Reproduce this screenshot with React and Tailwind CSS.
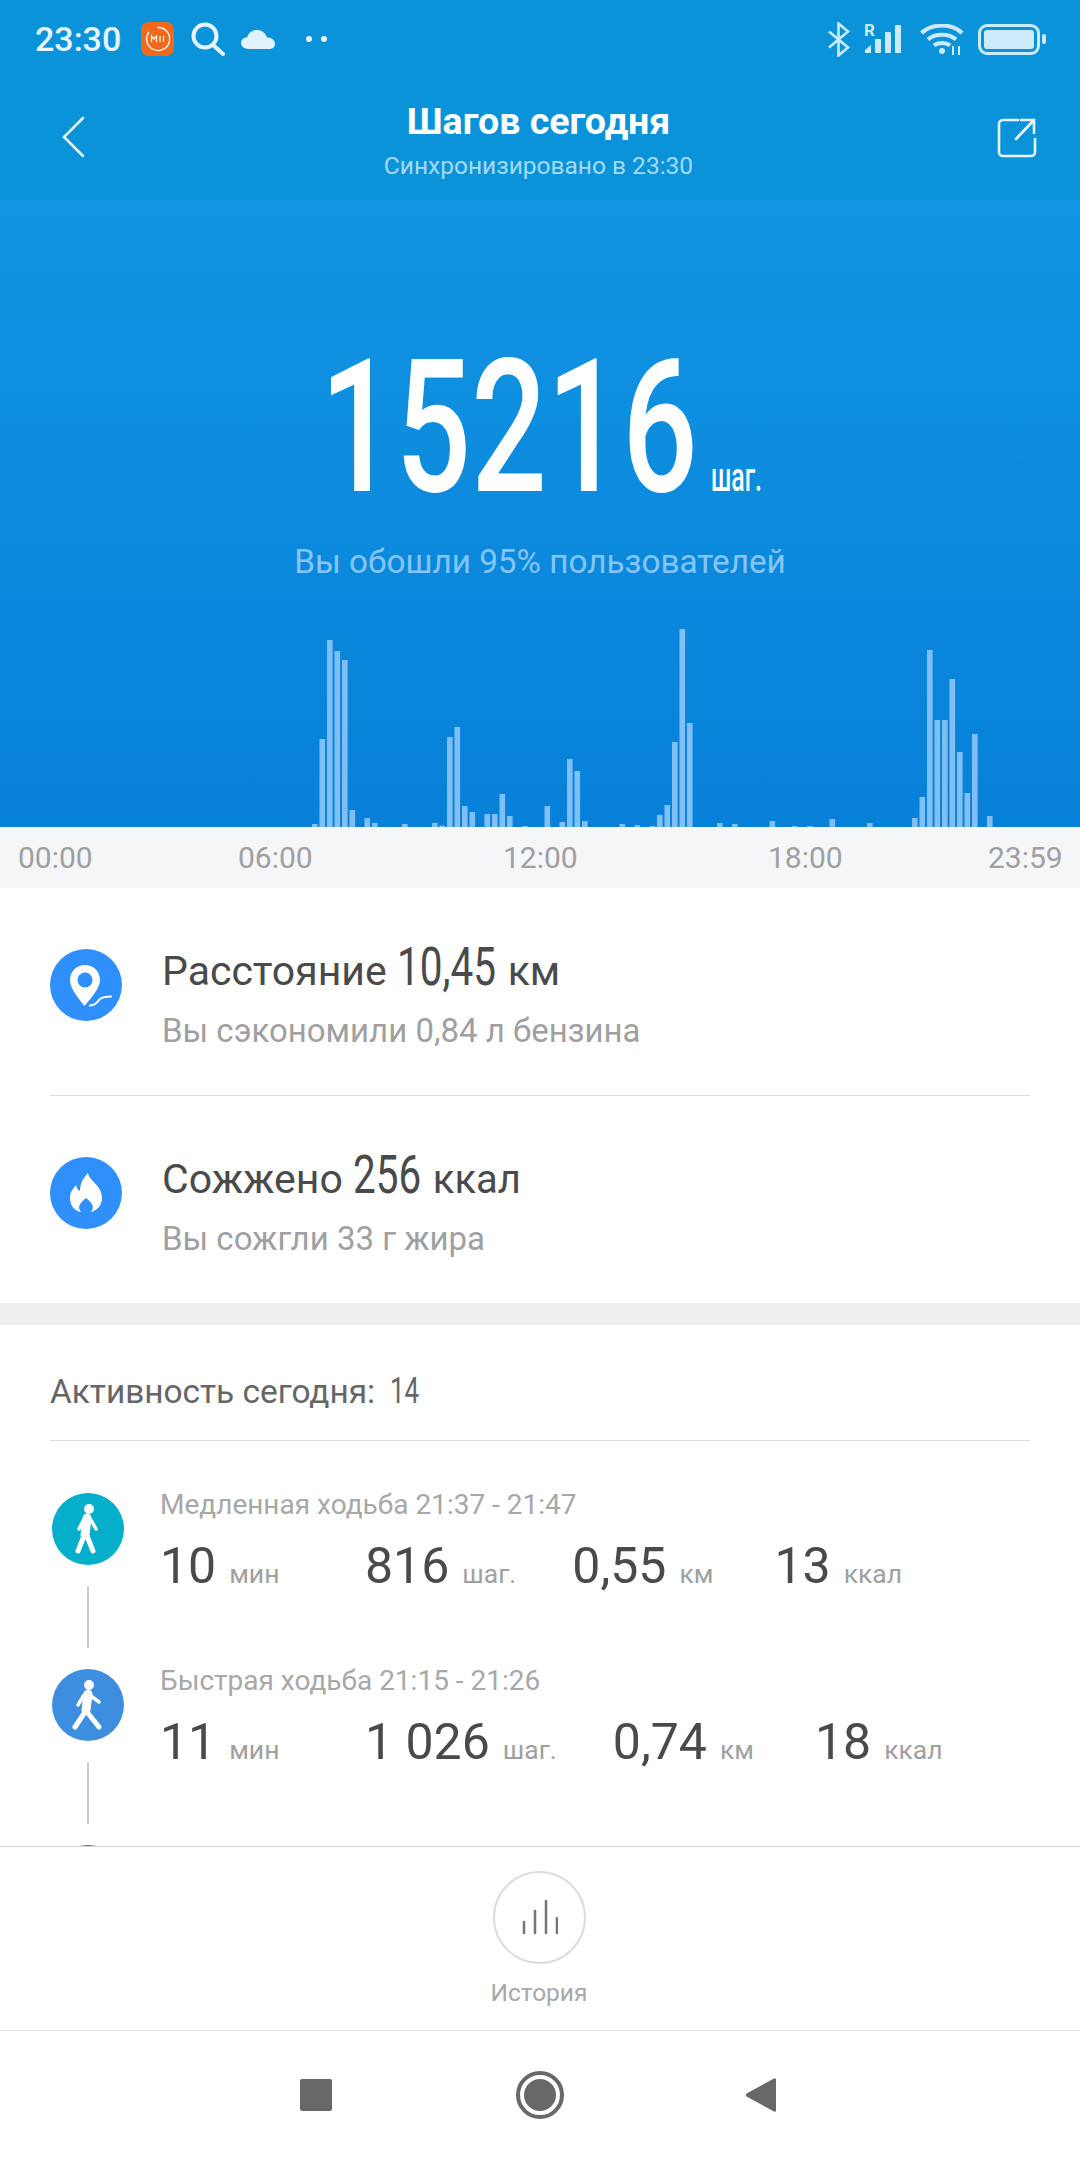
import React from 'react';

// высоты столбиков графика, 91 столбик с шагом 7.5px
const BARS = [
  3, 88, 187, 176, 167, 17, 0, 9, 4, 0, 0, 0, 3, 0, 0, 0, 4, 1.5, 90, 100, 21, 15, 0, 13, 13, 33, 11, 0, 1, 0,
  0, 21, 0, 5, 68, 56, 6, 0, 0, 0, 0, 3, 0, 2, 0, 1, 12, 22, 85, 198, 104, 0, 0, 0, 4, 0, 3, 0, 0, 0,
  0, 6, 0, 0, 1, 0, 1, 0, 0, 8, 0, 0, 0, 0, 4, 0, 0, 0, 0, 0, 9, 30, 177, 107, 107, 148, 75, 34, 93, 0, 11,
];

const StatusBar = () => (
  <div className="flex items-center h-[78px] pl-[35px] text-[#e6f5fd]">
    <span className="text-[34px] leading-none font-medium w-[106px]">23:30</span>
    <svg width="33" height="34" viewBox="0 0 33 34">
      <rect width="33" height="34" rx="8" fill="#f2691c" />
      <path d="M8 10 A11.5 11.5 0 1 0 16.5 5.5" fill="none" stroke="#fff" strokeWidth="1.3" />
      <path d="M10.500 20 V14 L13 17 L15.500 14 V20 M19 14 V20 M22.500 14 V20" fill="none" stroke="#fff" strokeWidth="1.2" />
    </svg>
    <svg className="ml-[17px]" width="35" height="34" viewBox="0 0 35 34" fill="none" stroke="#e6f5fd" strokeWidth="4">
      <circle cx="14" cy="14" r="11.5" />
      <path d="M22 23 L32 32" strokeLinecap="round" />
    </svg>
    <svg className="ml-[15px]" width="34" height="19" viewBox="0 0 34 19" fill="#e1f2fc">
      <path d="M8 19 C3 19 0 16 0 13 C0 9.500 3 7.500 6 7.500 C7.500 3 11 0 16 0 C21 0 24.500 3 26 7.500 C30.500 7.500 34 10 34 14 C34 17 31.500 19 28 19 Z" />
    </svg>
    <span className="ml-[31px] w-[6px] h-[6px] rounded-full bg-[#e6f5fd]" />
    <span className="ml-[9px] w-[6px] h-[6px] rounded-full bg-[#e6f5fd]" />

    <svg className="ml-[501px]" width="22" height="35" viewBox="0 0 22 35" fill="none" stroke="#cdeafa" strokeWidth="2.600">
      <path d="M1 9.500 L20 25.500 L10.500 33.500 V1.500 L20 9.500 L1 25.500" />
    </svg>
    <span className="ml-[14px] self-start mt-[22px] w-[12px] text-[17px] leading-none font-bold text-[#cdeafa]">R</span>
    <svg className="-ml-[12px]" width="41" height="31" viewBox="0 0 41 31" fill="#cdeafa">
      <path d="M1 29 V26 L7 21 V29 Z" />
      <rect x="11" y="15" width="6" height="14" rx="1" />
      <rect x="21" y="8" width="6" height="21" rx="1" />
      <rect x="31" y="1" width="6" height="28" rx="1" />
    </svg>
    <svg className="ml-[15px]" width="44" height="31" viewBox="0 0 44 31" fill="none" stroke="#cdeafa" strokeWidth="4">
      <path d="M1.500 9 C12 -1 32 -1 42 9" />
      <path d="M8 15.500 C15 9 29 9 36 15.500" />
      <path d="M14 21.500 C18 18 26 18 30 21.500" />
      <circle cx="22" cy="27" r="3" fill="#cdeafa" stroke="none" />
      <path d="M33 22 V31 M39 22 V31" strokeWidth="2" />
    </svg>
    <div className="ml-[14px] w-[62px] h-[31px] rounded-[9px] border-[3px] border-[#cdeafa] p-[3px]">
      <div className="w-full h-full rounded-[3px] bg-[#cdeafa]" />
    </div>
    <span className="ml-[2px] w-[4px] h-[10px] rounded-full bg-[#cdeafa]" />
  </div>
);

const TitleBar = () => (
  <div className="flex h-[122px] pl-[62px] pr-[43px]">
    <svg className="mt-[38px]" width="23" height="42" viewBox="0 0 23 42" fill="none" stroke="#e6f5fd" strokeWidth="2.500" strokeLinecap="round">
      <path d="M21 2 L2 21 L21 40" />
    </svg>
    <div className="flex-1 pr-[5px] flex flex-col items-center">
      <div className="mt-[25px] text-[37.5px] leading-none font-bold text-white">Шагов сегодня</div>
      <div className="mt-[13px] text-[24.5px] leading-none text-[#a3daf6]">Синхронизировано в 23:30</div>
    </div>
    <svg className="mt-[40px]" width="40" height="40" viewBox="0 0 40 40" fill="none" stroke="#e6f5fd" strokeWidth="2.600" strokeLinecap="round">
      <path d="M21 2 H6 A4 4 0 0 0 2 6 V34 A4 4 0 0 0 6 38 H34 A4 4 0 0 0 38 34 V21" />
      <path d="M19 21 L37 2 M24 2 H37 V15" />
    </svg>
  </div>
);

const Hero = () => (
  <div className="h-[627px] flex flex-col bg-linear-to-b from-[#1295e2] to-[#0780d9]">
    <div className="flex items-baseline pt-[134px] pl-[320px] h-[345px]">
      <span className="inline-block w-[391px] origin-left scale-x-[.715] text-[186px] leading-none font-medium text-white">15216</span>
      <span className="inline-block w-[50px] origin-left scale-x-[.62] text-[40px] leading-none font-medium text-white">шаг.</span>
    </div>
    <div className="text-center text-[33.3px] leading-none text-[#86c5f5]">Вы обошли 95% пользователей</div>
    <svg className="mt-auto" width="1080" height="200" viewBox="0 0 1080 200">
      {BARS.map((h, i) =>
        h > 0 ? <rect key={i} x={312 + i * 7.5} y={200 - h} width="5.6" height={h} fill="#80bff3" /> : null
      )}
    </svg>
  </div>
);

const TimeAxis = () => (
  <div className="flex items-center h-[61px] bg-[#f4f6f8] pl-[18px] text-[30px] leading-none text-[#a0a0a0]">
    <span className="w-[72px]">00:00</span>
    <span className="ml-[148px] w-[72px]">06:00</span>
    <span className="ml-[193px] w-[72px]">12:00</span>
    <span className="ml-[193px] w-[72px]">18:00</span>
    <span className="ml-[148px] w-[72px] whitespace-nowrap">23:59</span>
  </div>
);

const PinIcon = () => (
  <svg width="72" height="72" viewBox="0 0 72 72">
    <circle cx="36" cy="36" r="36" fill="#2f8ffb" />
    <path d="M35 16 C26.500 16 20 22.500 20 31 C20 40 29 50 34.500 57 C40 50 50 40 50 31 C50 22.500 43.500 16 35 16 Z" fill="#fff" />
    <circle cx="35" cy="31" r="7.500" fill="#2f8ffb" />
    <path d="M40 56.500 C46 56.500 47 53 50 50 C52.500 48 56 47.500 61 47.500" fill="none" stroke="#fff" strokeWidth="2" strokeLinecap="round" />
  </svg>
);

const FlameIcon = () => (
  <svg width="72" height="72" viewBox="0 0 72 72">
    <circle cx="36" cy="36" r="36" fill="#2f8ffb" />
    <path d="M38 16 C39 24 52 28 52 41 C52 49 46 54 41 55 C44 51 44 47 36 41 C28 47 28 51 31 55 C25 54 20 49 20 41 C20 35 23 32 26 28 C27 32 28 33 30 34 C30 27 33 21 38 16 Z" fill="#fff" />
  </svg>
);

const StatRow = ({ icon, last, children, sub }) => (
  <div className={`flex mx-[50px] ${last ? 'h-[207px]' : 'h-[208px] border-b border-[#dedede]'}`}>
    <div className="mt-[61px] w-[72px] h-[72px] shrink-0">{icon}</div>
    <div className="ml-[40px] pt-[52px]">
      <div className="flex items-baseline text-[41px] leading-none text-[#4a4a4a]">{children}</div>
      <div className="mt-[20px] text-[33px] leading-none text-[#a0a0a0]">{sub}</div>
    </div>
  </div>
);

const SlowWalker = ({ color }) => (
  <svg width="72" height="72" viewBox="0 0 72 72">
    <circle cx="36" cy="36" r="36" fill={color} />
    <circle cx="37" cy="16" r="5" fill="#fff" />
    <path d="M35 25 L33 42" stroke="#fff" strokeWidth="9" strokeLinecap="round" />
    <path d="M32 26 L27 36 M39 27 L44 36" stroke="#fff" strokeWidth="3.500" strokeLinecap="round" fill="none" />
    <path d="M32 43 L26 58 M35 43 L41 58" stroke="#fff" strokeWidth="5" strokeLinecap="round" fill="none" />
  </svg>
);

const FastWalker = ({ color }) => (
  <svg width="72" height="72" viewBox="0 0 72 72">
    <circle cx="36" cy="36" r="36" fill={color} />
    <circle cx="37" cy="16" r="5" fill="#fff" />
    <path d="M36 25 L34 41" stroke="#fff" strokeWidth="9" strokeLinecap="round" />
    <path d="M32 26 L26 36 M39 27 L47 33" stroke="#fff" strokeWidth="3.500" strokeLinecap="round" fill="none" />
    <path d="M33 43 L23 58 M35 43 L47 58" stroke="#fff" strokeWidth="5" strokeLinecap="round" fill="none" />
  </svg>
);

const Connector = () => <div className="my-[21px] w-[2px] h-[63px] bg-[#cdcdcd]" />;

const Value = ({ n, unit }) => (
  <span className="flex items-baseline">
    <span className="text-[50px] leading-none text-[#4a4a4a]">{n}</span>
    <span className="ml-[13px] text-[26.5px] leading-none text-[#a0a0a0]">{unit}</span>
  </span>
);

const Activity = ({ icon, label, values }) => (
  <div className="flex h-[176px] pl-[52px]">
    <div className="flex flex-col items-center w-[72px] shrink-0">
      <div className="w-[72px] h-[72px]">{icon}</div>
      <Connector />
    </div>
    <div className="ml-[36px] -mt-[2px]">
      <div className="text-[28px] leading-none text-[#a8a8a8]">{label}</div>
      <div className="mt-[22px] flex items-baseline">
        <span className="w-[205px]"><Value n={values[0][0]} unit={values[0][1]} /></span>
        <span className="mr-[56px]"><Value n={values[1][0]} unit={values[1][1]} /></span>
        <span className="mr-[61px]"><Value n={values[2][0]} unit={values[2][1]} /></span>
        <Value n={values[3][0]} unit={values[3][1]} />
      </div>
    </div>
  </div>
);

const App = () => (
  <div className="w-[1080px] h-[2160px] overflow-hidden bg-white font-[family-name:Roboto,sans-serif]">
    <div className="bg-[#0b93d9]">
      <StatusBar />
      <TitleBar />
    </div>
    <Hero />
    <TimeAxis />

    <StatRow icon={<PinIcon />} sub="Вы сэкономили 0,84 л бензина">
      <span>Расстояние</span>
      <span className="ml-[10px] inline-block w-[98px] origin-left scale-x-[.75] text-[54px] leading-none font-[450]">10,45</span>
      <span className="ml-[13px]">км</span>
    </StatRow>
    <StatRow icon={<FlameIcon />} last sub="Вы сожгли 33 г жира">
      <span>Сожжено</span>
      <span className="ml-[10px] inline-block w-[68px] origin-left scale-x-[.75] text-[54px] leading-none font-[450]">256</span>
      <span className="ml-[12px] text-[40px]">ккал</span>
    </StatRow>

    <div className="h-[22px] bg-[#eceef0]" />

    <div className="h-[521px] overflow-hidden">
      <div className="mx-[50px] h-[116px] pt-[47px] flex items-baseline border-b border-[#dedede] text-[#666666]">
        <span className="text-[33.4px] leading-none">Активность сегодня:</span>
        <span className="ml-[15px] inline-block origin-left scale-x-[.7] text-[37px] leading-none font-[450]">14</span>
      </div>
      <div className="pt-[52px]">
        <Activity
          icon={<SlowWalker color="#05aecb" />}
          label="Медленная ходьба 21:37 - 21:47"
          values={[['10', 'мин'], ['816', 'шаг.'], ['0,55', 'км'], ['13', 'ккал']]}
        />
        <Activity
          icon={<FastWalker color="#3e8ee0" />}
          label="Быстрая ходьба 21:15 - 21:26"
          values={[['11', 'мин'], ['1 026', 'шаг.'], ['0,74', 'км'], ['18', 'ккал']]}
        />
        <div className="w-[72px] h-[72px] ml-[52px] rounded-full bg-[#05a88f]" />
      </div>
    </div>

    <div className="border-t border-[#d2d2d2] h-[184px] flex flex-col items-center pt-[24px] pr-[2px]">
      <div className="w-[93px] h-[93px] shrink-0 rounded-full border-2 border-[#dddddd] flex items-center justify-center">
        <svg className="-ml-[2px]" width="40" height="40" viewBox="0 0 40 40" stroke="#757575" strokeWidth="2.500" strokeLinecap="round">
          <path d="M6 35 V24 M17 35 V13 M28 35 V3 M39 35 V20" />
        </svg>
      </div>
      <div className="mt-[17px] text-[24.5px] leading-none text-[#a8a8a8]">История</div>
    </div>

    <div className="flex items-center h-[129px] pl-[300px] border-t border-[#e4e4e4]">
      <div className="w-[32px] h-[32px] rounded-[2px] bg-[#686868]" />
      <div className="ml-[184px] w-[48px] h-[48px] rounded-full border-[4px] border-[#686868] p-[4px]">
        <div className="w-full h-full rounded-full bg-[#686868]" />
      </div>
      <svg className="ml-[181px]" width="31" height="36" viewBox="0 0 31 36">
        <path d="M29 1.500 Q31 0.500 31 3 V33 Q31 35.500 29 34.500 L1.500 19.500 Q0 18 1.500 16.500 Z" fill="#686868" />
      </svg>
    </div>
  </div>
);

export default App;
